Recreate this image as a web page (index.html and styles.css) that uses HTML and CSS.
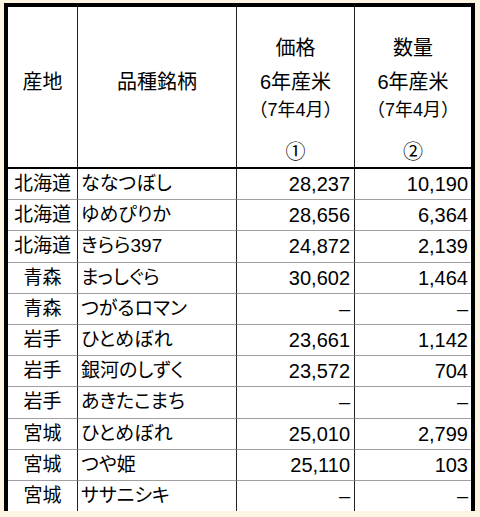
FILE: index.html
```html
<!DOCTYPE html>
<html lang="ja">
<head>
<meta charset="utf-8">
<title>産地品種銘柄別 価格・数量</title>
<link rel="stylesheet" href="styles.css">
</head>
<body>
<div class="sheet">
  <table class="rice">
    <colgroup>
      <col class="c-area">
      <col class="c-brand">
      <col class="c-price">
      <col class="c-qty">
    </colgroup>
    <thead>
      <tr>
        <th><div class="hcell h-simple">産地</div></th>
        <th><div class="hcell h-simple">品種銘柄</div></th>
        <th><div class="hcell h-stack"><div class="l1">価格</div><div class="l2">6年産米</div><div class="l3">（7年4月）</div><div class="l4">①</div></div></th>
        <th class="last"><div class="hcell h-stack"><div class="l1">数量</div><div class="l2">6年産米</div><div class="l3">（7年4月）</div><div class="l4">②</div></div></th>
      </tr>
    </thead>
    <tbody>
      <tr><td class="area">北海道</td><td class="brand">ななつぼし</td><td class="num price">28,237</td><td class="num qty last">10,190</td></tr>
      <tr><td class="area">北海道</td><td class="brand">ゆめぴりか</td><td class="num price">28,656</td><td class="num qty last">6,364</td></tr>
      <tr><td class="area">北海道</td><td class="brand">きらら397</td><td class="num price">24,872</td><td class="num qty last">2,139</td></tr>
      <tr><td class="area">青森</td><td class="brand">まっしぐら</td><td class="num price">30,602</td><td class="num qty last">1,464</td></tr>
      <tr><td class="area">青森</td><td class="brand">つがるロマン</td><td class="num price">–</td><td class="num qty last">–</td></tr>
      <tr><td class="area">岩手</td><td class="brand">ひとめぼれ</td><td class="num price">23,661</td><td class="num qty last">1,142</td></tr>
      <tr><td class="area">岩手</td><td class="brand">銀河のしずく</td><td class="num price">23,572</td><td class="num qty last">704</td></tr>
      <tr><td class="area">岩手</td><td class="brand">あきたこまち</td><td class="num price">–</td><td class="num qty last">–</td></tr>
      <tr><td class="area">宮城</td><td class="brand">ひとめぼれ</td><td class="num price">25,010</td><td class="num qty last">2,799</td></tr>
      <tr><td class="area">宮城</td><td class="brand">つや姫</td><td class="num price">25,110</td><td class="num qty last">103</td></tr>
      <tr class="end"><td class="area">宮城</td><td class="brand">ササニシキ</td><td class="num price">–</td><td class="num qty last">–</td></tr>
    </tbody>
  </table>
</div>
</body>
</html>
```
FILE: styles.css
```css
html, body {
  margin: 0;
  padding: 0;
  background: #fdf5e1;
}
body {
  font-family: "Liberation Sans", "Noto Sans CJK JP", sans-serif;
  color: #000;
}
.sheet {
  margin: 3px 0 0 4px;
  width: 471px;
  box-sizing: border-box;
  border: 4px solid #000;
  border-bottom: 0;
  background: #fff;
}
.rice {
  width: 463px;
  border-spacing: 0;
  table-layout: fixed;
}
.c-area { width: 70px; }
.c-brand { width: 159px; }
.c-price { width: 118px; }
.c-qty { width: 116px; }

.rice th,
.rice td {
  padding: 0;
  border-right: 1px solid #222;
}
.rice th.last,
.rice td.last {
  border-right: 0;
}
.rice th {
  font-weight: normal;
  font-size: 20px;
  vertical-align: top;
  border-bottom: 2px solid #000;
}
.hcell {
  height: 160px;
  box-sizing: border-box;
  text-align: center;
}
.h-simple {
  padding-top: 58px;
  line-height: 34px;
}
.h-stack {
  padding-top: 24px;
  line-height: 34px;
}
.h-stack .l3 {
  font-size: 18px;
  line-height: 22px;
}
.h-stack .l4 {
  margin-top: 14px;
}
.rice td {
  font-size: 19px;
  height: 30.2px;
  line-height: 30px;
  border-bottom: 1px solid #a0a0a0;
  white-space: nowrap;
  vertical-align: middle;
}
.rice tr.end td {
  border-bottom: 0;
}
.area {
  text-align: center;
}
.brand {
  padding-left: 3px !important;
  font-feature-settings: "palt";
}
.rice td.num {
  text-align: right;
  font-size: 20px;
}
.price {
  padding-right: 4px !important;
}
.qty {
  padding-right: 3px !important;
}
```
